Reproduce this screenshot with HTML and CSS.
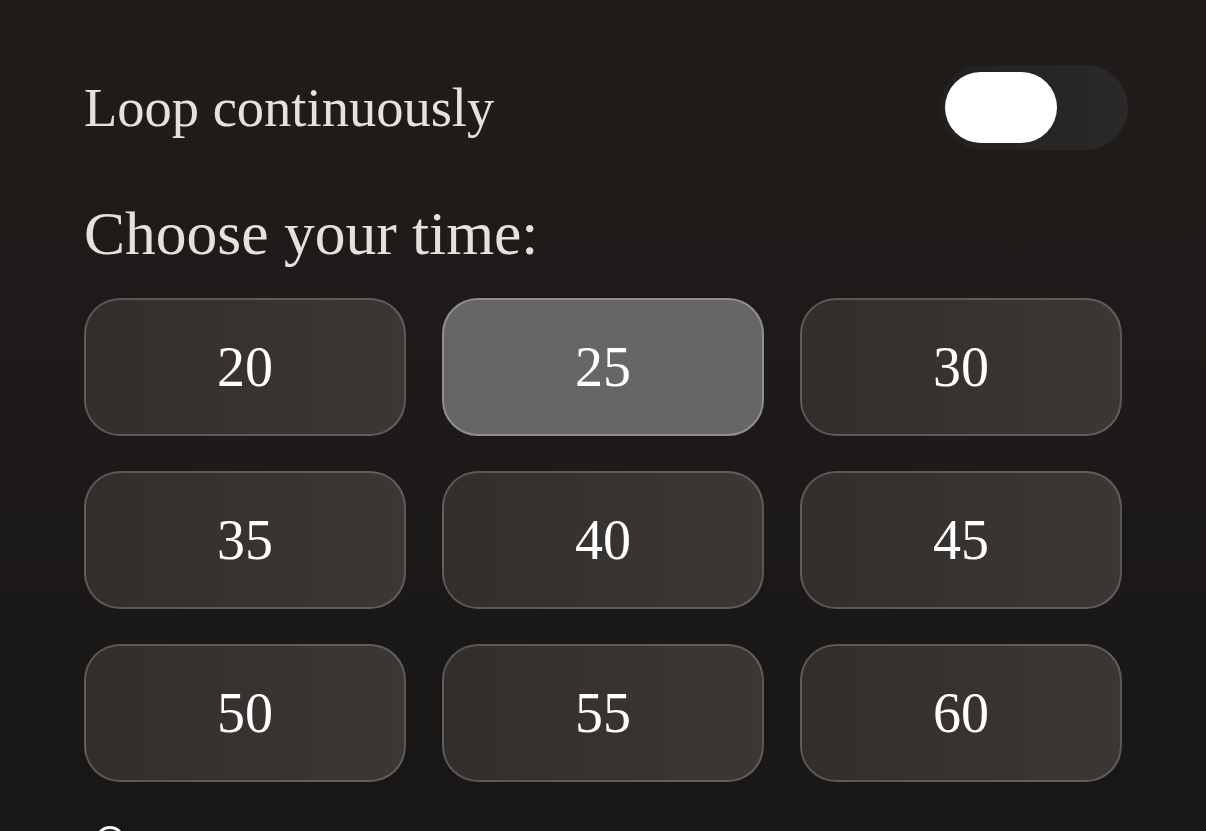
FILE: index.html
```html
<!DOCTYPE html>
<html lang="en">
<head>
    <meta charset="UTF-8">
    <meta name="viewport" content="width=device-width, initial-scale=1.0">
    <title>Timer Settings</title>
    <link rel="stylesheet" href="styles.css">
</head>
<body>
    <div class="container">
        <div class="setting-row">
            <span class="setting-label">Loop continuously</span>
            <button class="toggle" aria-label="Loop continuously"><span class="toggle-knob"></span></button>
        </div>
        <h2 class="section-title">Choose your time:</h2>
        <div class="time-grid">
            <button class="time-btn">20</button>
            <button class="time-btn active">25</button>
            <button class="time-btn">30</button>
            <button class="time-btn">35</button>
            <button class="time-btn">40</button>
            <button class="time-btn">45</button>
            <button class="time-btn">50</button>
            <button class="time-btn">55</button>
            <button class="time-btn">60</button>
        </div>
        <div class="next-row">
            <span class="radio"></span>
        </div>
    </div>
</body>
</html>
```

FILE: styles.css
```css
html, body { margin: 0; height: 831px; overflow: hidden; }
body { font-family: "Liberation Serif", "Times New Roman", serif; background: linear-gradient(180deg, #201c1a 0%, #1d1a19 50%, #181716 100%); color: #e2dfdc; }
.container { padding: 65px 84px 0; }
.setting-row { display: flex; align-items: center; justify-content: space-between; height: 85px; }
.setting-label { font-size: 54.5px; line-height: 64px; color: #e4e1de; }
.toggle { width: 188px; height: 85px; margin-right: -6px; padding: 7px 5px; box-sizing: border-box; border: none; border-radius: 43px; background: linear-gradient(90deg, #232020 0%, #2a2828 100%); display: flex; align-items: center; cursor: pointer; }
.toggle-knob { width: 112px; height: 71px; border-radius: 36px; background: #ffffff; }
.section-title { margin: 47px 0 29px; font-size: 61.5px; line-height: 72px; font-weight: normal; color: #e4e1de; }
.time-grid { display: grid; grid-template-columns: repeat(3, 1fr); column-gap: 36px; row-gap: 35px; }
.time-btn { height: 138px; border: 2px solid rgba(255,255,255,0.2); border-radius: 36px; background: linear-gradient(90deg, #312e2c 0%, #3a3735 100%); color: #ffffff; font-family: inherit; font-size: 56px; cursor: pointer; }
.time-btn.active { background: #666666; border-color: #8f8f8f; }
.next-row { margin-top: 44px; padding-left: 11px; }
.radio { display: block; width: 30px; height: 30px; box-sizing: border-box; border: 3px solid #f2f2f2; border-radius: 50%; }
```
